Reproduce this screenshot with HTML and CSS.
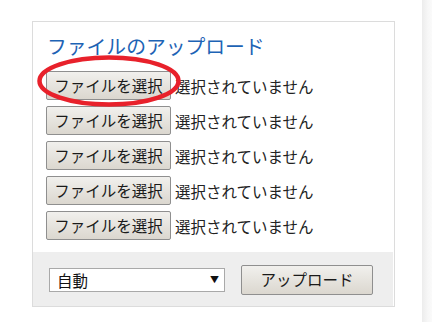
FILE: index.html
```html
<!DOCTYPE html>
<html lang="ja">
<head>
<meta charset="utf-8">
<link rel="stylesheet" href="styles.css">
</head>
<body>
<div class="page">
  <div class="main">
    <div class="card">
      <h2 class="title">ファイルのアップロード</h2>
      <div class="rows">
        <div class="row"><button class="btn file-btn">ファイルを選択</button><span class="status">選択されていません</span></div>
        <div class="row"><button class="btn file-btn">ファイルを選択</button><span class="status">選択されていません</span></div>
        <div class="row"><button class="btn file-btn">ファイルを選択</button><span class="status">選択されていません</span></div>
        <div class="row"><button class="btn file-btn">ファイルを選択</button><span class="status">選択されていません</span></div>
        <div class="row"><button class="btn file-btn">ファイルを選択</button><span class="status">選択されていません</span></div>
      </div>
      <div class="footer">
        <div class="select-wrap">
          <select class="select"><option>自動</option></select>
          <span class="arrow">▼</span>
        </div>
        <button class="btn upload-btn">アップロード</button>
      </div>
      <svg class="mark" width="152" height="56" viewBox="0 0 152 56">
        <ellipse cx="76" cy="28" rx="69.5" ry="23.5" fill="none" stroke="#e8212b" stroke-width="4.5"/>
      </svg>
    </div>
  </div>
  <div class="edge"></div>
</div>
</body>
</html>
```
FILE: styles.css
```css
html, body {
  margin: 0;
  padding: 0;
  background: #ffffff;
}
body {
  font-family: "Noto Sans CJK JP", "Noto Sans", sans-serif;
  color: #222222;
}
.page {
  display: flex;
  height: 322px;
}
.main {
  flex: 1;
  padding: 21px 0 0 32px;
}
.edge {
  width: 10px;
  background: linear-gradient(to right, #ececec, #f7f7f7 60%, #fafafa);
}
.card {
  position: relative;
  width: 361px;
  border: 1px solid #dcdcdc;
  background: #ffffff;
}
.title {
  margin: 0;
  padding: 10px 0 0 14px;
  font-size: 19.8px;
  font-weight: normal;
  line-height: 27px;
  color: #1d63b5;
}
.rows {
  display: flex;
  flex-direction: column;
  gap: 6px;
  padding: 12px 0 0 13px;
}
.row {
  display: flex;
  align-items: center;
  gap: 4px;
}
.btn {
  font-family: "Noto Sans CJK JP", "Noto Sans", sans-serif;
  font-size: 15.5px;
  color: #1a1a1a;
  background: linear-gradient(#f1f0ed, #dbd7cf);
  border: 1px solid #8f8f8f;
  border-radius: 2px;
  padding: 0;
  line-height: 1;
}
.file-btn {
  width: 125px;
  height: 29px;
}
.status {
  font-size: 15.5px;
  line-height: 20px;
  color: #222222;
}
.footer {
  display: flex;
  align-items: center;
  height: 54px;
  margin-top: 12px;
  padding: 1px 0 0 16px;
  box-sizing: border-box;
  background: #eeeeee;
  margin-right: 1px;
  gap: 16px;
}
.select-wrap {
  position: relative;
  width: 176px;
  height: 24px;
}
.select {
  appearance: none;
  -webkit-appearance: none;
  width: 176px;
  height: 24px;
  margin: 0;
  padding: 0 0 0 7px;
  border: 1px solid #a9a9a9;
  background: #ffffff;
  border-radius: 0;
  font-family: "Noto Sans CJK JP", "Noto Sans", sans-serif;
  font-size: 15.5px;
  color: #111111;
}
.arrow {
  position: absolute;
  right: 6px;
  top: 6px;
  font-size: 9px;
  line-height: 12px;
  color: #111111;
  pointer-events: none;
}
.upload-btn {
  width: 132px;
  height: 30px;
}
.mark {
  position: absolute;
  left: 0;
  top: 31px;
}
```
